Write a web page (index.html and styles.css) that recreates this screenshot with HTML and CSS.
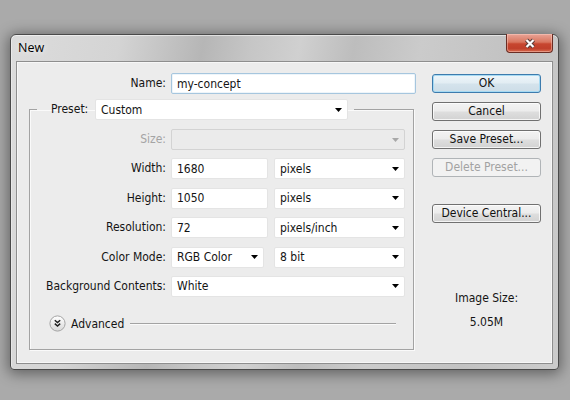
FILE: index.html
```html
<!DOCTYPE html>
<html>
<head>
<meta charset="utf-8">
<link rel="stylesheet" href="styles.css">
</head>
<body>
<div class="window">
  <div class="titlebar">
    <span class="title">New</span>
    <div class="close">
      <svg width="12" height="11" viewBox="0 0 12 11"><path d="M2.5 2L9.5 9M9.5 2L2.5 9" stroke="#5a3a36" stroke-width="4.2" fill="none"/><path d="M2.5 2L9.5 9M9.5 2L2.5 9" stroke="#fff" stroke-width="2.2" fill="none"/></svg>
    </div>
  </div>
  <div class="panel">
    <div class="leftcol">
      <div class="namerow">
        <label class="lbl">Name:</label>
        <div class="field name"><span>my-concept</span></div>
      </div>
      <fieldset class="preset">
        <legend class="legend">
          <span class="plabel">Preset:</span>
          <div class="field sel w253"><span>Custom</span><svg class="arr" width="7" height="4"><path d="M0 0h7L3.5 4z" fill="#000"/></svg></div>
        </legend>
        <div class="grid">
          <label class="lbl dis">Size:</label>
          <div class="field sel disabled"><span></span><svg class="arr" width="7" height="4"><path d="M0 0h7L3.5 4z" fill="#a8a8a8"/></svg></div>

          <label class="lbl">Width:</label>
          <div class="pair">
            <div class="field w97"><span>1680</span></div>
            <div class="field sel w131"><span>pixels</span><svg class="arr" width="7" height="4"><path d="M0 0h7L3.5 4z" fill="#000"/></svg></div>
          </div>

          <label class="lbl">Height:</label>
          <div class="pair">
            <div class="field w97"><span>1050</span></div>
            <div class="field sel w131"><span>pixels</span><svg class="arr" width="7" height="4"><path d="M0 0h7L3.5 4z" fill="#000"/></svg></div>
          </div>

          <label class="lbl">Resolution:</label>
          <div class="pair">
            <div class="field w97"><span>72</span></div>
            <div class="field sel w131"><span>pixels/inch</span><svg class="arr" width="7" height="4"><path d="M0 0h7L3.5 4z" fill="#000"/></svg></div>
          </div>

          <label class="lbl">Color Mode:</label>
          <div class="pair wide">
            <div class="field sel w93"><span>RGB Color</span><svg class="arr" width="7" height="4"><path d="M0 0h7L3.5 4z" fill="#000"/></svg></div>
            <div class="field sel w131"><span>8 bit</span><svg class="arr" width="7" height="4"><path d="M0 0h7L3.5 4z" fill="#000"/></svg></div>
          </div>

          <label class="lbl">Background Contents:</label>
          <div class="field sel"><span>White</span><svg class="arr" width="7" height="4"><path d="M0 0h7L3.5 4z" fill="#000"/></svg></div>

          <div class="advanced">
            <svg width="17" height="17" viewBox="0 0 17 17">
              <defs><linearGradient id="g" x1="0" y1="0" x2="0" y2="1"><stop offset="0" stop-color="#ffffff"/><stop offset="1" stop-color="#d8d8d8"/></linearGradient></defs>
              <circle cx="8.5" cy="8.5" r="7.6" fill="url(#g)" stroke="#a4a4a4"/>
              <path d="M5.8 5.2L8.5 7.6L11.2 5.2M5.8 8.6L8.5 11L11.2 8.6" stroke="#1e1e1e" stroke-width="1.5" fill="none"/>
            </svg>
            <span class="advtext">Advanced</span>
            <span class="advline"></span>
          </div>
        </div>
      </fieldset>
    </div>
    <div class="rightcol">
      <div class="btn ok">OK</div>
      <div class="btn">Cancel</div>
      <div class="btn">Save Preset...</div>
      <div class="btn off">Delete Preset...</div>
      <div class="btn device">Device Central...</div>
      <div class="imgsize">Image Size:</div>
      <div class="imgval">5.05M</div>
    </div>
  </div>
</div>
</body>
</html>
```
FILE: styles.css
```css
html, body {
  margin: 0;
  padding: 0;
}
body {
  width: 570px;
  height: 400px;
  overflow: hidden;
  background: #aaaaaa;
  font-family: "DejaVu Sans Condensed", "DejaVu Sans", sans-serif;
  font-size: 12px;
  color: #141414;
}
.window {
  box-sizing: border-box;
  margin: 34px 0 0 10px;
  width: 549px;
  height: 336px;
  border: 1px solid #4a4a4a;
  border-radius: 6px 6px 4px 4px;
  padding: 0 5px 5px 5px;
  display: flex;
  flex-direction: column;
  background: linear-gradient(100deg, #dcdcdc 0%, #d4d4d4 18%, #b6b6b6 32%, #c6c6c6 40%, #d0d0d0 48%, #bdbdbd 57%, #cbcbcb 68%, #c2c2c2 84%, #cccccc 100%);
  box-shadow: 0 2px 14px 2px rgba(0,0,0,0.42), inset 0 1px 0 rgba(255,255,255,0.55), inset 1px 0 0 rgba(255,255,255,0.4);
}
.titlebar {
  height: 26px;
  display: flex;
  align-items: flex-start;
}
.title {
  font-family: "Open Sans", "Noto Sans", sans-serif;
  font-size: 12.5px;
  line-height: 16px;
  padding: 5px 0 0 2px;
  color: #000;
  text-shadow: 0 0 6px rgba(255,255,255,0.9);
}
.close {
  margin-left: auto;
  margin-top: -1px;
  width: 47px;
  height: 19px;
  box-sizing: border-box;
  border: 1px solid #6a2d24;
  border-top: none;
  border-radius: 0 0 4px 4px;
  background: linear-gradient(#e9a497 0%, #d9765f 45%, #c7462f 55%, #c0402b 80%, #d76a4e 100%);
  box-shadow: inset 0 0 0 1px rgba(255,210,200,0.45);
  display: flex;
  align-items: center;
  justify-content: center;
}
.panel {
  flex: 1;
  box-sizing: border-box;
  border: 1px solid #8e8e8e;
  background: #ececec;
  box-shadow: inset 0 0 0 1px #f7f7f7;
  display: flex;
  padding: 11px 0 0 12px;
}
.leftcol {
  width: 388px;
}
.rightcol {
  margin-left: 15px;
  width: 109px;
  padding-top: 1px;
  display: flex;
  flex-direction: column;
  align-items: stretch;
}
.lbl {
  text-align: right;
  line-height: 21px;
  white-space: nowrap;
}
.lbl.dis {
  color: #a4a4a4;
}
.namerow {
  display: grid;
  grid-template-columns: 137px 245px;
  column-gap: 5px;
}
.field {
  box-sizing: border-box;
  height: 21px;
  background: #fff;
  border: 1px solid #e4e4e4;
  border-radius: 2px;
  padding: 0 5px 0 5px;
  display: flex;
  align-items: center;
  white-space: nowrap;
}
.field span {
  flex: 1;
}
.field.name {
  border-color: #a6c6de;
  box-shadow: inset 0 0 0 1px #eef5fa;
}
.field.sel {
  padding-right: 5px;
}
.field.disabled {
  background: #ebebeb;
  border-color: #d3d3d3;
}
.arr {
  flex: none;
}
.w253 { width: 253px; }
.w97 { width: 97px; }
.w131 { width: 131px; }
.w93 { width: 93px; }
.preset {
  box-sizing: border-box;
  width: 385px;
  margin: 5px 0 0 0;
  padding: 9px 8px 17px 0;
  border: 1px solid #a3a3a3;
  box-shadow: 1px 1px 0 #fafafa, inset 1px 1px 0 #fafafa;
}
.legend {
  margin-left: 7px;
  padding: 0 6px 0 14px;
  display: flex;
  align-items: center;
}
.plabel {
  width: 44px;
  line-height: 21px;
}
.grid {
  display: grid;
  grid-template-columns: 136px 234px;
  column-gap: 5px;
  row-gap: 8.4px;
}
.pair {
  display: flex;
  justify-content: space-between;
}
.advanced {
  grid-column: 1 / 3;
  margin-top: 10.6px;
  padding: 0 9px 0 19px;
  display: flex;
  align-items: center;
  height: 16px;
}
.advanced svg {
  flex: none;
}
.advtext {
  margin-left: 5px;
  font-size: 12px;
}
.advline {
  flex: 1;
  margin-left: 6px;
  height: 1px;
  background: #a3a3a3;
  box-shadow: 0 1px 0 #fafafa;
}
.btn {
  box-sizing: border-box;
  height: 19px;
  margin-bottom: 9px;
  border: 1px solid #707070;
  border-radius: 3px;
  background: linear-gradient(#f3f3f3 0%, #ececec 48%, #dedede 52%, #d2d2d2 100%);
  box-shadow: inset 0 0 0 1px rgba(255,255,255,0.75);
  text-align: center;
  line-height: 17px;
  color: #111;
}
.btn.ok {
  border-color: #3d7bad;
  background: linear-gradient(#edf5fa 0%, #e2edf3 48%, #d4e3ec 52%, #cddde7 100%);
  box-shadow: inset 0 0 0 1px #a6daf3;
}
.btn.off {
  border-color: #b0b4b7;
  background: #f2f2f2;
  box-shadow: none;
  color: #a2a2a2;
}
.btn.device {
  margin-top: 18px;
}
.imgsize {
  margin-top: 59px;
  text-align: center;
  line-height: 14px;
}
.imgval {
  margin-top: 10px;
  text-align: center;
  line-height: 14px;
}
```
